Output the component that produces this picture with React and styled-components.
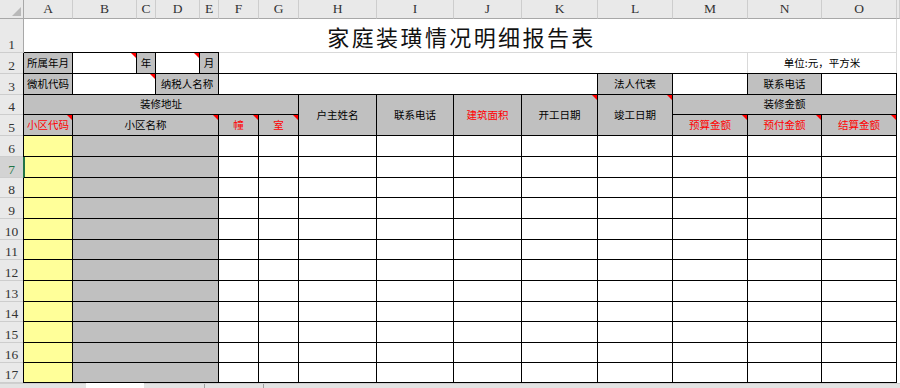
import React from 'react';
import styled, { createGlobalStyle, css } from 'styled-components';

const GlobalStyle = createGlobalStyle`
  html, body {
    margin: 0;
    padding: 0;
    background: #fff;
  }
  body {
    width: 900px;
    height: 388px;
    overflow: hidden;
    font-family: "Noto Sans CJK SC", "Noto Sans", sans-serif;
  }
`;

const COLS = ['A', 'B', 'C', 'D', 'E', 'F', 'G', 'H', 'I', 'J', 'K', 'L', 'M', 'N', 'O'];
const WIDTHS = [49, 64, 19, 44, 19, 40, 40, 78, 77, 68, 76, 75, 75, 74, 75];
const BODY_HEIGHTS = [21, 21, 20, 21, 21, 20, 21, 21, 20, 21, 20, 20];
const ROW_HEIGHTS = [34, 21, 21, 20, 21, ...BODY_HEIGHTS];

const GREY = '#c0c0c0';
const YELLOW = '#ffff99';

// column index helper: A -> 2 (grid column 1 is the row header)
const col = (letter) => COLS.indexOf(letter) + 2;

const Window = styled.div`
  display: flex;
  flex-direction: column;
  width: 900px;
  height: 388px;
  overflow: hidden;
`;

const Sheet = styled.div`
  flex: none;
  display: grid;
  grid-template-columns: 24px ${WIDTHS.map((w) => `${w}px`).join(' ')} 1fr;
  grid-template-rows: 19px ${ROW_HEIGHTS.map((h) => `${h}px`).join(' ')};
`;

const HeadBase = css`
  background: #e9e9e9;
  color: #333;
  font-family: "Liberation Serif", serif;
  font-size: 13.5px;
  line-height: 14px;
  display: flex;
  justify-content: center;
`;

const Corner = styled.div`
  ${HeadBase};
  grid-column: 1;
  grid-row: 1;
  position: relative;
  border-right: 1px solid #a8a8a8;
  border-bottom: 1px solid #a8a8a8;

  &::after {
    content: '';
    position: absolute;
    right: 2px;
    bottom: 2px;
    border-left: 9px solid transparent;
    border-bottom: 9px solid #b9b9b9;
  }
`;

const ColHead = styled.div`
  ${HeadBase};
  grid-column: ${(p) => p.$c};
  grid-row: 1;
  align-items: center;
  border-right: 1px solid #cdcdcd;
  border-bottom: 1px solid #a8a8a8;
`;

const RowHead = styled.div`
  ${HeadBase};
  grid-column: 1;
  grid-row: ${(p) => p.$r};
  align-items: flex-end;
  background: ${(p) => (p.$active ? '#d3d3d3' : '#e9e9e9')};
  color: ${(p) => (p.$active ? '#217346' : '#333')};
  border-right: 1px solid #a8a8a8;
  border-bottom: 1px solid #cdcdcd;
`;

const Cell = styled.div`
  grid-column: ${(p) => p.$c} / span ${(p) => p.$cs || 1};
  grid-row: ${(p) => p.$r} / span ${(p) => p.$rs || 1};
  position: relative;
  display: flex;
  align-items: center;
  justify-content: center;
  background: ${(p) => p.$fill || '#fff'};
  color: ${(p) => (p.$red ? '#ff0000' : '#000')};
  font-size: 10.5px;
  line-height: 1;
  white-space: nowrap;
  border-right: 1px solid ${(p) => (p.$box ? '#000' : '#d9d9d9')};
  border-bottom: 1px solid ${(p) => (p.$box ? '#000' : '#d9d9d9')};

  ${(p) =>
    p.$box &&
    css`
      box-shadow: 0 -1px 0 #000, -1px 0 0 #000;
    `}

  ${(p) =>
    p.$sel &&
    css`
      box-shadow: 0 -1px 0 #000, -1px 0 0 #217346, inset 1px 0 0 #217346;
    `}

  ${(p) =>
    p.$note &&
    css`
      &::after {
        content: '';
        position: absolute;
        top: 0;
        right: 0;
        border-left: 5px solid transparent;
        border-top: 5px solid #ff0000;
      }
    `}
`;

const Title = styled(Cell)`
  font-size: 22px;
  letter-spacing: 2.4px;
  padding-left: 3px;
  padding-top: 1px;
  color: #111;
`;

const TabBar = styled.div`
  flex: 1;
  display: flex;
  align-items: stretch;
  background: #e3e3e3;
  border-top: 1px solid #cfcfcf;
  padding-left: 86px;
`;

const SheetTab = styled.div`
  width: 58px;
  background: #fff;
  margin-top: -1px;
`;

const TabSep = styled.div`
  width: 1px;
  margin-left: ${(p) => p.$gap}px;
  background: #a0a0a0;
`;

const headerCells = [
  // row 2
  { r: 3, c: 'A', text: '所属年月', fill: GREY, box: true },
  { r: 3, c: 'B', text: '', box: true, note: true },
  { r: 3, c: 'C', text: '年', fill: GREY, box: true },
  { r: 3, c: 'D', text: '', box: true, note: true },
  { r: 3, c: 'E', text: '月', fill: GREY, box: true },
  { r: 3, c: 'F', cs: 8, text: '' },
  { r: 3, c: 'N', cs: 2, text: '单位:元，平方米' },
  // row 3
  { r: 4, c: 'A', text: '微机代码', fill: GREY, box: true },
  { r: 4, c: 'B', cs: 2, text: '', box: true, note: true },
  { r: 4, c: 'D', cs: 2, text: '纳税人名称', fill: GREY, box: true },
  { r: 4, c: 'F', cs: 6, text: '', box: true },
  { r: 4, c: 'L', text: '法人代表', fill: GREY, box: true },
  { r: 4, c: 'M', text: '', box: true },
  { r: 4, c: 'N', text: '联系电话', fill: GREY, box: true },
  { r: 4, c: 'O', text: '', box: true },
  // rows 4-5
  { r: 5, c: 'A', cs: 7, text: '装修地址', fill: GREY, box: true },
  { r: 5, c: 'H', rs: 2, text: '户主姓名', fill: GREY, box: true },
  { r: 5, c: 'I', rs: 2, text: '联系电话', fill: GREY, box: true },
  { r: 5, c: 'J', rs: 2, text: '建筑面积', fill: GREY, box: true, red: true },
  { r: 5, c: 'K', rs: 2, text: '开工日期', fill: GREY, box: true, note: true },
  { r: 5, c: 'L', rs: 2, text: '竣工日期', fill: GREY, box: true, note: true },
  { r: 5, c: 'M', cs: 3, text: '装修金额', fill: GREY, box: true },
  { r: 6, c: 'A', text: '小区代码', fill: GREY, box: true, red: true, note: true },
  { r: 6, c: 'B', cs: 4, text: '小区名称', fill: GREY, box: true, note: true },
  { r: 6, c: 'F', text: '幢', fill: GREY, box: true, red: true, note: true },
  { r: 6, c: 'G', text: '室', fill: GREY, box: true, red: true, note: true },
  { r: 6, c: 'M', text: '预算金额', fill: GREY, box: true, red: true, note: true },
  { r: 6, c: 'N', text: '预付金额', fill: GREY, box: true, red: true, note: true },
  { r: 6, c: 'O', text: '结算金额', fill: GREY, box: true, red: true, note: true },
];

const bodyRows = BODY_HEIGHTS.map((_, i) => i + 6);
const whiteCols = ['F', 'G', 'H', 'I', 'J', 'K', 'L', 'M', 'N', 'O'];

export default function App() {
  return (
    <Window>
      <GlobalStyle />
      <Sheet>
        <Corner />
        {COLS.map((letter) => (
          <ColHead key={letter} $c={col(letter)}>{letter}</ColHead>
        ))}
        <ColHead $c={17} />

        {ROW_HEIGHTS.map((_, i) => (
          <RowHead key={i} $r={i + 2} $active={i + 1 === 7}>{i + 1}</RowHead>
        ))}

        <Title $r={2} $c={col('A')} $cs={15}>家庭装璜情况明细报告表</Title>

        {headerCells.map((cell, i) => (
          <Cell
            key={i}
            $r={cell.r}
            $c={col(cell.c)}
            $cs={cell.cs}
            $rs={cell.rs}
            $fill={cell.fill}
            $box={cell.box}
            $red={cell.red}
            $note={cell.note}
          >
            {cell.text}
          </Cell>
        ))}

        {bodyRows.map((n) => (
          <React.Fragment key={n}>
            <Cell $r={n + 1} $c={col('A')} $fill={YELLOW} $box $sel={n === 7} />
            <Cell $r={n + 1} $c={col('B')} $cs={4} $fill={GREY} $box />
            {whiteCols.map((letter) => (
              <Cell key={letter} $r={n + 1} $c={col(letter)} $box />
            ))}
          </React.Fragment>
        ))}
      </Sheet>
      <TabBar>
        <SheetTab />
        <TabSep $gap={60} />
        <TabSep $gap={58} />
      </TabBar>
    </Window>
  );
}
